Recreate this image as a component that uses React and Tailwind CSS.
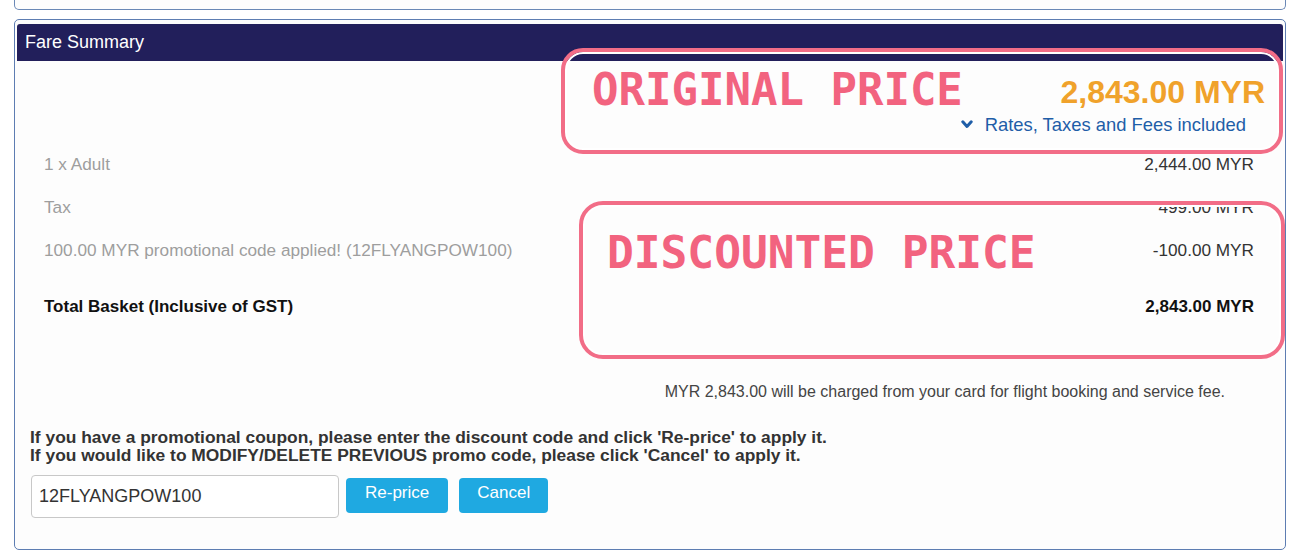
export default function App() {
  const rows = [
    { label: "1 x Adult", value: "2,444.00 MYR" },
    { label: "Tax", value: "499.00 MYR" },
    { label: "100.00 MYR promotional code applied! (12FLYANGPOW100)", value: "-100.00 MYR" },
  ];
  return (
    <div className="min-h-[558px] w-[1300px] bg-white px-[14px] font-['Liberation_Sans',Arial,sans-serif]">
      <div className="h-[10px] rounded-b-[5px] border-[1.5px] border-t-0 border-[#6a88b6] bg-[#fdfdfd]" />
      <div className="relative mt-[9px] h-[531px] rounded-[5px] border-[1.5px] border-[#5d7db2] bg-[#fdfdfd] px-[2px] pt-[3.5px]">
        <div className="flex h-[37px] items-center rounded-t-[3px] bg-[#221f5b] pl-[8px] pt-[1px] text-[18px] text-white">
          Fare Summary
        </div>

        <div className="mt-[13px] pr-[18px] text-right text-[32px] font-bold leading-[36px] text-[#f0a22b]">
          2,843.00 MYR
        </div>
        <div className="mt-[4px] flex items-center justify-end pr-[37px] text-[18.4px] leading-[22px] text-[#1f5ea8]">
          <svg viewBox="0 0 12 9" className="mr-[12px] h-[9px] w-[12px]" fill="none" stroke="#1f5ea8" strokeWidth="3" strokeLinecap="round" strokeLinejoin="round">
            <path d="M1.8 1.8 L6 6.4 L10.2 1.8" />
          </svg>
          Rates, Taxes and Fees included
        </div>

        <div className="mt-[8px]">
          {rows.map((r) => (
            <div key={r.label} className="flex h-[43px] items-center justify-between pl-[27px] pr-[29px] text-[17.2px]">
              <span className="text-[#9e9e9e]">{r.label}</span>
              <span className="text-[#333333]">{r.value}</span>
            </div>
          ))}
          <div className="mt-[13px] flex h-[43px] items-center justify-between pl-[27px] pr-[29px] text-[17px] font-bold text-[#111111]">
            <span>Total Basket (Inclusive of GST)</span>
            <span>2,843.00 MYR</span>
          </div>
        </div>

        <div className="mt-[53px] pr-[58px] text-right text-[16px] leading-[20px] text-[#444444]">
          MYR 2,843.00 will be charged from your card for flight booking and service fee.
        </div>

        <div className="mt-[26px] pl-[13px] text-[17.4px] font-bold leading-[18px] text-[#333333]">
          <div>If you have a promotional coupon, please enter the discount code and click 'Re-price' to apply it.</div>
          <div>If you would like to MODIFY/DELETE PREVIOUS promo code, please click 'Cancel' to apply it.</div>
        </div>

        <div className="mt-[11px] flex items-start pl-[14px]">
          <div className="flex h-[43px] w-[308px] items-center rounded-[4px] border border-[#c8c8c8] bg-white pl-[7px] text-[18px] text-[#333333]">
            12FLYANGPOW100
          </div>
          <button className="ml-[7px] mt-[3px] h-[35px] rounded-[4px] bg-[#1fa9e1] px-[19px] pb-[5px] text-[17px] text-white">
            Re-price
          </button>
          <button className="ml-[11px] mt-[3px] h-[35px] rounded-[4px] bg-[#1fa9e1] px-[18px] pb-[5px] text-[17px] text-white">
            Cancel
          </button>
        </div>

        {/* Annotation overlays */}
        <div className="absolute left-[546px] top-[28px] h-[106px] w-[722px] rounded-[22px] border-[4px] border-[#f26d87] shadow-[inset_0_0_0_2px_#ffffff]">
          <span className="absolute left-[27px] top-[16px] font-['DejaVu_Sans_Mono',monospace] text-[44px] font-bold leading-[44px] text-[#f2637f]">
            ORIGINAL PRICE
          </span>
        </div>
        <div className="absolute left-[564px] top-[181px] h-[158px] w-[706px] rounded-[24px] border-[4px] border-[#f26d87] shadow-[inset_0_0_0_2px_#ffffff]">
          <span className="absolute left-[24px] top-[26px] font-['DejaVu_Sans_Mono',monospace] text-[44.5px] font-bold leading-[44px] text-[#f2637f]">
            DISCOUNTED PRICE
          </span>
        </div>
      </div>
    </div>
  );
}
